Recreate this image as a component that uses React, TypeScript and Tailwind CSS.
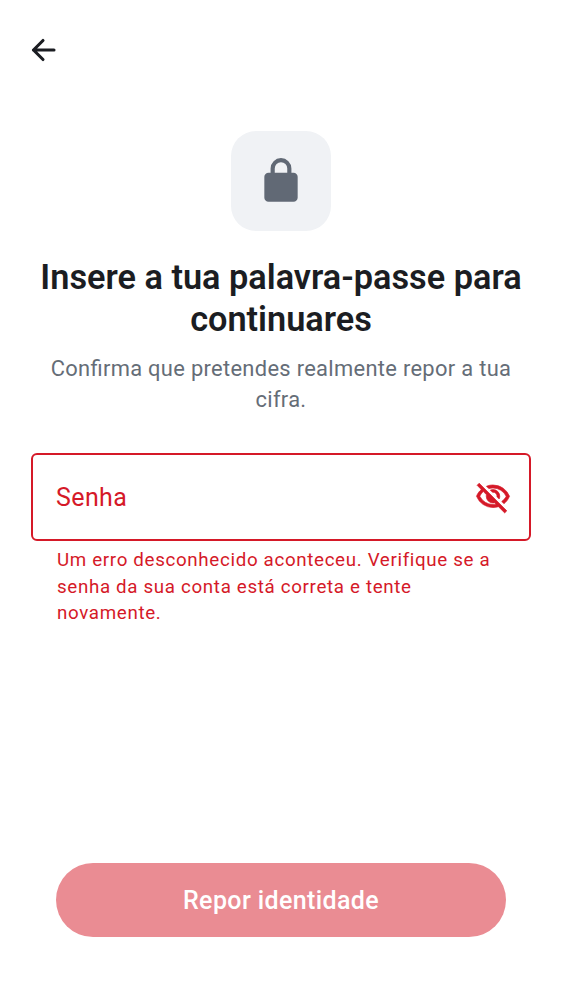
export default function App() {
  return (
    <main className="flex h-[1000px] w-[562px] flex-col bg-white font-[Roboto,sans-serif] text-[#1b1d22]">
      <header className="flex h-[100px] items-center pl-[25px]">
        <button aria-label="Voltar">
          <svg className="size-[37px]" viewBox="0 0 37 37" fill="none" stroke="currentColor" strokeWidth="3.1" strokeLinecap="round" strokeLinejoin="round">
            <path d="M29 18H8.4M18 8.5L8.5 18l9.5 9.5" />
          </svg>
        </button>
      </header>
      <section className="flex flex-col items-center pt-[31px]">
        <div className="flex size-[100px] items-center justify-center rounded-[25px] bg-[#f0f2f5] text-[#616975]">
          <svg className="size-[50px]" viewBox="0 0 24 24" fill="currentColor">
            <path d="M6 22q-.82 0-1.41-.59T4 20V10q0-.82.59-1.41T6 8h1V6q0-2.07 1.46-3.54T12 1t3.54 1.46T17 6v2h1q.82 0 1.41.59T20 10v10q0 .82-.59 1.41T18 22zM9 8h6V6q0-1.25-.87-2.12T12 3t-2.12.88T9 6z" />
          </svg>
        </div>
        <h1 className="mt-[25px] whitespace-nowrap text-center text-[34.3px] font-semibold leading-[42px]">
          Insere a tua palavra-passe para<br />continuares
        </h1>
        <p className="mt-[13px] whitespace-nowrap text-center text-[21.9px] leading-[31px] tracking-[0.31px] text-[#656d77] [font-feature-settings:'liga'_1]">
          Confirma que pretendes realmente repor a tua<br />cifra.
        </p>
      </section>
      <section className="mx-[31px] mt-[38px] text-[#d51928]">
        <div className="flex h-[88px] items-center justify-between rounded-[6px] border-2 border-current pl-[23px] pr-[18px]">
          <span className="pt-px text-[25px] tracking-[0.4px]">Senha</span>
          <svg className="size-[36px]" viewBox="0 0 24 24" fill="currentColor" stroke="currentColor" strokeWidth="0.45" strokeLinejoin="round">
            <path d="M16.1 13.3l-1.45-1.45q.23-1.18-.67-2.2t-2.33-.8L10.2 7.4q.42-.2.86-.3T12 7q1.88 0 3.19 1.31T16.5 11.5q0 .5-.1.94t-.3.86m3.2 3.15L17.85 15q.95-.73 1.69-1.59T20.8 11.5q-1.25-2.53-3.59-4.01T12 6q-.72 0-1.42.1t-1.38.3L7.65 4.85q1.02-.42 2.1-.64T12 4q3.78 0 6.73 2.09T23 11.5q-.57 1.48-1.51 2.74t-2.19 2.21m.5 6.15-4.2-4.15q-.87.28-1.76.41T12 19q-3.78 0-6.73-2.09T1 11.5q.52-1.33 1.32-2.46T4.15 7L1.4 4.2l1.4-1.4 18.4 18.4zM5.55 8.4q-.73.65-1.33 1.42T3.2 11.5q1.25 2.53 3.59 4.01T12 17q.5 0 .98-.06t.97-.14l-.9-.95q-.27.07-.52.11T12 16q-1.88 0-3.19-1.31T7.5 11.5q0-.27.04-.52t.11-.53z" />
          </svg>
        </div>
        <p className="ml-[26px] mt-[6px] whitespace-nowrap text-[18.75px] leading-[26.6px] tracking-[0.66px]">
          Um erro desconhecido aconteceu. Verifique se a<br />senha da sua conta está correta e tente<br />novamente.
        </p>
      </section>
      <button className="mx-[56px] mb-[63px] mt-auto flex h-[74.5px] items-center justify-center rounded-full bg-[#ea8c93] pt-[2px] text-[25px] font-medium tracking-[0.38px] text-white">
        Repor identidade
      </button>
    </main>
  );
}
